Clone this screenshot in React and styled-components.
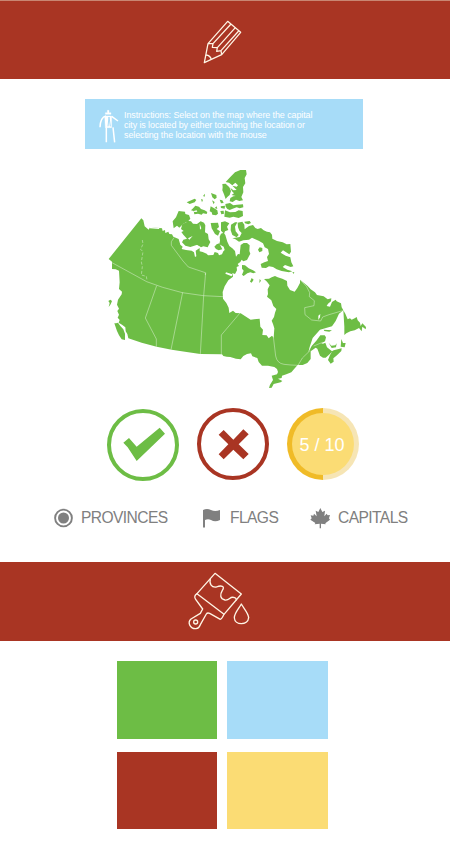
import React from "react";
import styled, { createGlobalStyle } from "styled-components";

const Global = createGlobalStyle`
  * { box-sizing: border-box; }
  body { margin: 0; background: #fff; font-family: "Liberation Sans", Arial, sans-serif; }
  svg { display: block; flex: none; }
`;

const Page = styled.main`
  width: 451px;
  height: 868px;
  overflow: hidden;
  display: flex;
  flex-direction: column;
  background: #fff;
`;

const Banner = styled.header`
  width: 450px;
  height: ${(p) => p.$height}px;
  flex: none;
  padding: ${(p) => p.$pad};
  background: #a93523;
  border-top: ${(p) => (p.$edge ? "1px solid #c98672" : "none")};
`;

const Instructions = styled.section`
  width: 278px;
  height: 50px;
  flex: none;
  margin: 20px 0 0 85px;
  padding: 10px 0 0 14px;
  display: flex;
  background: #a7dcf8;
`;

const InstructionText = styled.p`
  margin: 1px 0 0 5px;
  color: #fff;
  font-size: 8.95px;
  letter-spacing: -0.09px;
  line-height: 10px;
  white-space: nowrap;
`;

const MapArea = styled.section`
  height: 235px;
  flex: none;
  margin: 11px 0 0 100px;
`;

const Badges = styled.section`
  display: flex;
  gap: 18px;
  margin: 13px 0 0 107px;
  height: 72px;
  flex: none;
`;

const Badge = styled.div`
  width: 72px;
  height: 72px;
  display: grid;
  place-items: center;
  border-radius: 50%;
  border: 4px solid ${(p) => p.$color};
  margin-top: ${(p) => p.$drop || 0}px;
`;

const Progress = styled.div`
  width: 72px;
  height: 72px;
  margin-left: -0.5px;
  padding: 5px;
  border-radius: 50%;
  background: linear-gradient(90deg, #f0bb27 50%, #f6e5b5 50%);
`;

const Score = styled.div`
  height: 62px;
  display: grid;
  place-items: center;
  border-radius: 50%;
  background: #fbdc74;
  color: #fff;
  font-size: 18px;
  padding: 2px 1px 0 0;
`;

const Nav = styled.nav`
  display: flex;
  height: 22px;
  margin: 27px 0 33px 53px;
  flex: none;
`;

const NavItem = styled.div`
  display: flex;
  align-items: center;
  gap: ${(p) => p.$gap}px;
  width: ${(p) => p.$width}px;
  color: #808080;
  font-size: 15.6px;
  letter-spacing: -0.58px;
  line-height: 22px;
  white-space: nowrap;
`;

const Palette = styled.section`
  display: grid;
  grid-template-columns: 100px 100.5px;
  gap: 13px 10px;
  margin: 20px 0 0 117px;
`;

const Swatch = styled.div`
  height: ${(p) => p.$height}px;
  background: ${(p) => p.$color};
`;

const Pencil = () => (
  <svg width="80" height="78" viewBox="0 3 240 234" fill="none" stroke="#fff5e5" strokeWidth="3.8" strokeLinejoin="round">
    <path d="M43 188 54 131 113 64 152 97 95 164Z" />
    <path d="M54 131 69 131 67 142 82 143 80 154 93 152 95 164M69 131 123 72M82 143 136 83M93 152 146 93M48 165Q61 166 64 179" />
  </svg>
);

const Brush = () => (
  <svg width="80" height="79" viewBox="0 6 240 237" fill="none" stroke="#fff5e5" strokeWidth="4" strokeLinejoin="round">
    <path d="M105 40 184 102 132 163 51 101Z" />
    <path d="M51 101Q40 108 47 118L68 147 61 160 33 177C21 188 31 207 48 206Q57 205 61 194L79 162Q82 157 89 160L121 178Q125 178 132 163M91 57C87 72 95 83 109 81C124 75 136 78 127 91C119 104 120 117 135 120C151 122 148 107 164 113Q171 116 168 121M184 132C177 145 163 159 163 173C164 197 204 197 206 173C205 159 192 146 184 132Z" />
    <circle cx="47" cy="186" r="6" />
  </svg>
);

const Traveller = () => (
  <svg width="20" height="34" viewBox="1 -1 60 102" fill="none" stroke="#fff">
    <path d="M18 20H39V55H20ZM26 3H31V10H37V15H20V10H26Z" fill="#fff" />
    <path d="M22 20Q5 24 4 54M39 21 58 35M23 54V99M43 54 48 99" strokeWidth="4.5" />
    <path d="M31 23 28 51M31 23 35 51" stroke="#a7dcf8" strokeWidth="3" />
  </svg>
);

/* Land outlines drawn at three units per pixel. */
const mainland = "M124 175 130 181 134 199 146 209 150 201 186 205 188 213 195 210 196 219 205 215 208 222 216 223 220 230 236 237 241 254 248 260 245 267 258 270 275 272 282 277 285 291 289 289 287 272 299 264 299 274 308 276 320 281 324 286 340 285 344 276 354 279 357 286 366 283 370 274 374 270 371 260 358 253 360 242 359 230 363 221 371 218 376 225 382 245 388 258 397 265 405 273 408 290 414 282 419 283 422 255 431 249 441 249 449 256 448 273 451 281 441 300 430 304 425 299 421 306 413 312 417 318 410 321 411 331 405 342 397 339 399 350 385 361 374 379 368 396 369 416 379 429 386 443 388 459 399 452 407 459 422 460 452 479 479 476 481 500 489 509 487 525 500 526 506 535 516 527 521 533 523 505 519 492 515 482 522 471 525 458 529 447 520 438 514 421 501 410 504 402 503 388 509 376 501 365 492 357 507 356 515 352 525 348 533 352 547 356 561 363 562 377 570 390 584 395 592 384 600 369 600 359 612 369 623 378 632 388 645 397 651 405 671 409 683 418 694 415 693 424 684 431 680 438 690 440 696 426 707 419 710 424 723 430 725 442 730 451 717 461 707 483 696 499 660 509 638 534 629 561 625 577 635 558 649 542 661 526 674 526 678 532 675 544 664 550 669 551 676 548 681 562 696 574 701 571 713 568 725 565 724 573 711 586 700 595 701 605 692 611 684 600 690 585 696 575 687 584 677 593 669 593 660 587 652 566 647 563 632 574 632 597 622 609 608 615 593 615 585 624 574 637 559 643 546 647 545 654 534 656 547 663 542 667 521 672 515 683 507 684 510 674 519 660 515 647 531 643 534 636 531 627 523 621 504 617 486 617 476 606 472 594 457 589 453 580 441 582 430 588 422 598 408 596 391 591 380 590 370 588 366 583 301 582 260 576 215 569 170 560 125 548 85 535 82 522 77 514 76 502 66 494 56 488 59 480 53 473 57 464 52 453 57 446 51 434 54 419 65 403 66 395 57 387 59 367 57 332 47 328 36 327 36 305 26 297Z";

const islands = [
  "M218 184 228 172 236 153 255 155 256 162 267 165 271 176 265 183 250 191 238 203 231 197 221 205Z",
  "M247 192 259 187 261 182 273 184 279 191 291 192 302 184 312 188 316 196 315 217 324 222 326 238 331 246 323 262 310 259 303 262 292 254 271 261 256 257 246 247 250 239 261 236 250 224 244 216 251 213 243 207Z",
  "M260 127 284 116 289 120 284 127 269 132Z",
  "M273 151 280 144 286 137 297 140 303 147 314 151 322 156 320 162 309 160 305 164 294 161 283 163 281 153Z",
  "M309 108 315 101 314 110ZM303 117 309 119 306 127ZM333 99 349 105 350 113 344 118 337 112ZM336 121 344 126 341 133ZM332 139 345 146 352 151 354 161 348 166 337 164 335 157 329 154ZM344 144 350 139 352 147ZM359 119 367 121 371 129 363 130ZM362 139 375 137 374 146 363 144ZM361 153 371 152 372 161 364 163Z",
  "M367 72 377 71 388 82 393 93 389 105 382 111 377 117 372 103 367 91 368 81Z",
  "M377 66 391 51 405 37 421 30 438 30 440 43 434 54 436 70 429 81 430 97 424 111 429 121 418 123 408 119 398 126 389 124 391 114 400 109 407 108 395 105 402 100 396 94 391 83 400 91 410 90 397 77 410 80 414 76 406 68 397 76 387 68Z",
  "M376 132 390 129 400 136 411 134 429 133 430 142 419 145 410 142 398 146 389 150 382 147 377 140Z",
  "M375 151 390 157 406 156 416 151 428 153 429 168 416 174 400 170 389 173 373 170Z",
  "M332 189 354 188 357 201 350 207 360 214 354 227 345 222 335 205ZM363 187 375 184 388 190 381 200 385 210 375 214 372 221 363 212Z",
  "M350 253 358 250 363 260 367 268 356 271 348 267 343 260Z",
  "M285 247 295 249 300 258 290 254Z",
  "M393 194 405 187 412 187 405 200 407 214 416 225 410 232 397 225 392 211Z",
  "M413 188 427 185 433 194 434 208 447 198 459 195 466 204 473 207 483 204 491 211 501 215 510 217 516 224 517 236 531 243 548 247 560 253 571 252 573 275 568 283 549 271 542 278 557 287 571 292 574 307 580 319 572 321 555 315 548 321 562 329 577 334 567 337 545 333 530 328 519 321 507 319 498 324 485 323 482 312 493 307 504 303 501 291 507 282 504 267 494 262 489 250 476 242 464 237 456 233 447 239 430 241 417 245 405 237 397 235 419 231 425 219 418 212 414 202Z",
  "M433 185 449 183 453 189 445 193 435 190ZM479 262 487 264 487 273 478 277 474 269Z",
  "M426 315 435 316 446 325 459 331 468 337 460 340 451 337 442 340 431 348 426 344 431 332 426 326Z",
  "M455 354 461 359 455 368 450 365ZM479 357 483 362 478 369ZM577 336 583 337 581 342Z",
  "M48 490 54 488 61 498 70 508 75 521 75 540 65 538 57 526 51 513 43 490ZM25 423 31 419 36 423 32 433 26 441 29 429Z",
  "M730 451 736 461 743 478 750 475 755 479 764 475 770 471 773 481 780 488 782 498 787 490 798 501 797 508 787 500 785 514 777 504 764 511 751 514 739 520 733 525 733 500Z",
  "M671 509 696 511 688 515 673 513ZM686 548 694 557 706 556 710 550 708 562 695 564ZM724 537 729 549 737 549 734 562 722 560Z"
];

const CanadaMap = () => (
  <svg width="270" height="235" viewBox="0 0 810 705" aria-label="Canada">
    <path d={mainland} fill="#6dbd45" />
    {islands.map((d) => <path key={d} d={d} fill="#6dbd45" />)}
    <g fill="#fff">
      <path d="M147 200 177 203 178 207 149 205ZM494 452 505 447 508 455 500 460ZM655 467 661 462 660 472 655 480ZM489 508 500 509 500 514 491 513ZM378 337 397 343 395 349 376 341Z" />
      <path d="M264 235 278 228 268 239ZM299 191 304 205 300 209ZM281 153 290 151 292 155 283 156Z" />
    </g>
    <g fill="none" stroke="#fff" strokeWidth="1.8" strokeOpacity=".65">
      <path d="M36 308 140 365 188 382 247 398 310 407 369 410M170 377 136 474 169 537 169 560M248 397 213 569M311 407 301 582M316 345V338L289 329 265 321 249 303 214 256 214 245 222 233M317 338 311 407M364 583 364 525 420 459M520 530 527 588Q531 610 552 613L573 615 594 616 607 594 631 571M641 558 668 547" />
      <path d="M127 240 129 252 122 268 129 275 124 306 127 320 124 345 139 349 141 361" strokeDasharray="9 5" />
      <path d="M602 361 620 380 629 398 628 410 643 422 642 437 614 443 615 464 635 480 662 483 668 471 687 464 728 452" />
    </g>
  </svg>
);

const Check = () => (
  <svg width="64" height="64" viewBox="0 0 192 192">
    <path d="M50 104 37 90 54 76 77 102 146 45 162 63 77 145Z" transform="translate(0 -1)" fill="#6dbd45" />
  </svg>
);

const Cross = () => (
  <svg width="64" height="64" viewBox="0 0 192 192">
    <path d="M68 54 97 83 127 52 143 67 113 97 143 126 127 142 97 113 68 142 53 127 82 97 53 68Z" fill="#a93523" />
  </svg>
);

const Target = () => (
  <svg width="20" height="20" viewBox="0 0 20 20">
    <circle cx="10.5" cy="10" r="8.4" fill="none" stroke="#808080" strokeWidth="1.9" />
    <circle cx="10.5" cy="10" r="5.5" fill="#808080" />
  </svg>
);

const Flag = () => (
  <svg width="19" height="22" viewBox="0 0 19 22">
    <path d="M1 3Q5 .8 9 3Q13 5 18 3V13Q13 15.5 9 13Q6 11.5 3 13V20.5H1Z" fill="#808080" />
  </svg>
);

const Leaf = () => (
  <svg width="20" height="22" viewBox="0 0 60 66">
    <path d="M31 3 37 15 45 11 43 28 50 20 53 25 60 24 57 34 60 38 46 49 47 52 33 50V64H29V50L14 52 16 48 1 38 5 34 2 25 10 26 12 20 20 28 17 11 25 15Z" fill="#808080" />
  </svg>
);

export default function App() {
  return (
    <Page>
      <Global />
      <Banner $height={79} $pad="0 0 0 190px" $edge><Pencil /></Banner>
      <Instructions>
        <Traveller />
        <InstructionText>
          Instructions: Select on the map where the capital<br />
          city is located by either touching the location or<br />
          selecting the location with the mouse
        </InstructionText>
      </Instructions>
      <MapArea><CanadaMap /></MapArea>
      <Badges>
        <Badge $color="#6dbd45" $drop={1}><Check /></Badge>
        <Badge $color="#a93523"><Cross /></Badge>
        <Progress><Score>5 / 10</Score></Progress>
      </Badges>
      <Nav>
        <NavItem $width={149} $gap={8}><Target />PROVINCES</NavItem>
        <NavItem $width={108} $gap={9}><Flag />FLAGS</NavItem>
        <NavItem $width={110} $gap={8}><Leaf />CAPITALS</NavItem>
      </Nav>
      <Banner $height={79} $pad="0 0 0 180px"><Brush /></Banner>
      <Palette>
        <Swatch $height={78} $color="#6dbd45" />
        <Swatch $height={78} $color="#a7dcf8" />
        <Swatch $height={77} $color="#a93523" />
        <Swatch $height={77} $color="#fbdc74" />
      </Palette>
    </Page>
  );
}
